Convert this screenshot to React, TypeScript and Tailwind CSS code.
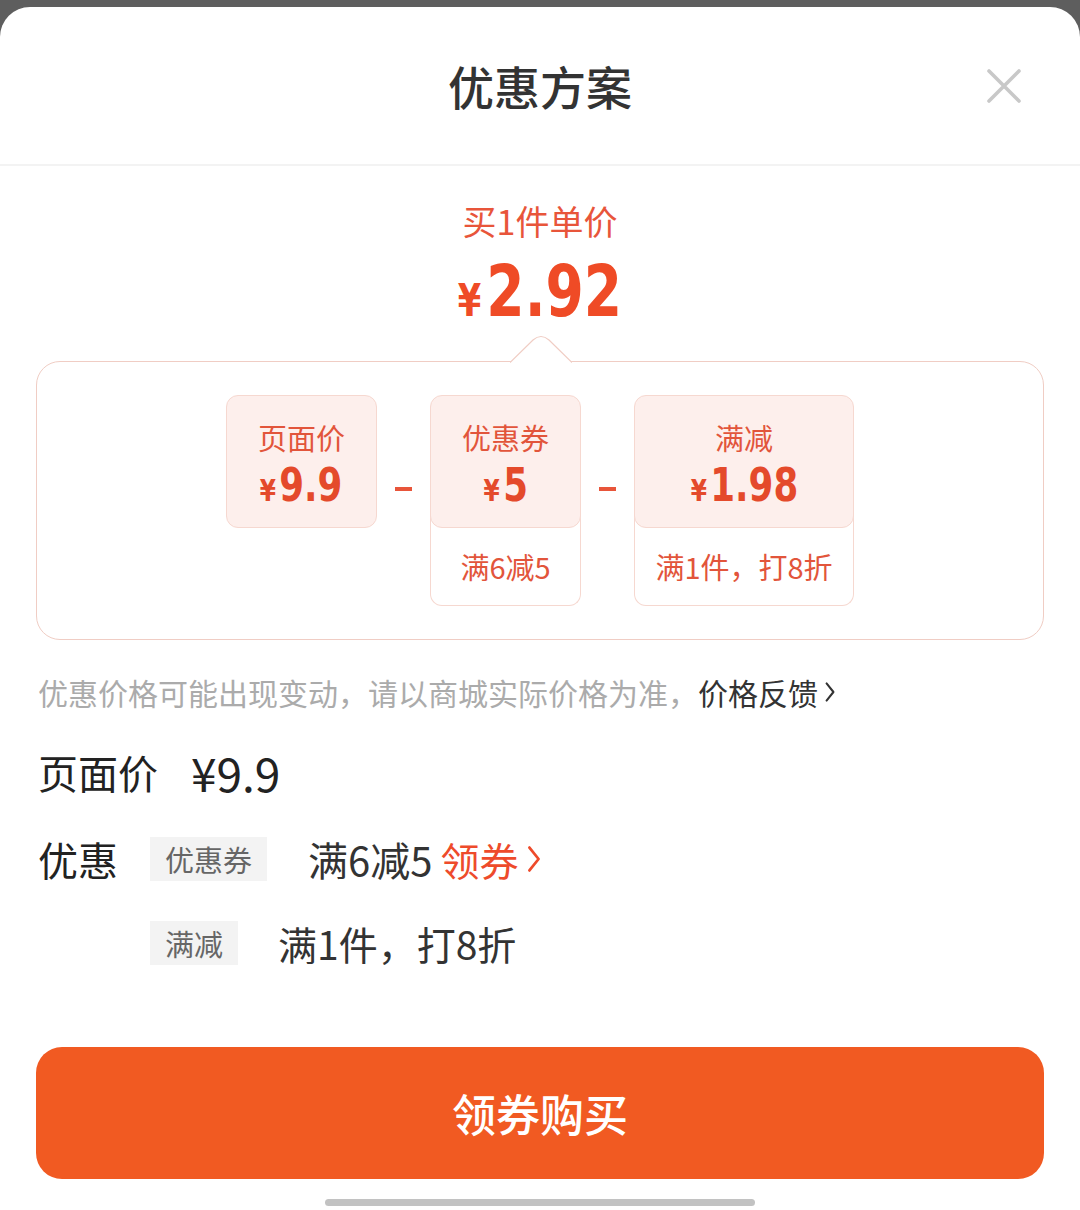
import { type ReactNode } from "react";

const CJK = { fontFamily: "'Noto Sans CJK SC', 'Noto Sans', sans-serif" };
const NUM = { fontFamily: "'DejaVu Sans Condensed', 'DejaVu Sans', Roboto, sans-serif" };

function Chevron({ className }: { className?: string }) {
  return (
    <svg viewBox="0 0 14 26" className={className} fill="none" stroke="currentColor" strokeWidth="2.4" strokeLinecap="round" strokeLinejoin="round">
      <path d="M3 3 L11 13 L3 23" />
    </svg>
  );
}

function PriceCard({ label, price, note, width }: { label: string; price: string; note?: string; width: string }) {
  return (
    <div className={`flex flex-col ${width}`}>
      <div className="relative z-10 h-[133px] rounded-[12px] bg-[#fdefec] border border-[#f6d8d0] flex flex-col items-center pt-[22px]">
        <div className="text-[29px] leading-[38px] text-[#e2553b]">{label}</div>
        <div className="mt-[7px] flex items-baseline text-[#e44a2b] font-bold scale-x-[0.86]" style={NUM}>
          <span className="text-[30px] leading-[44px] mr-[4px]">¥</span>
          <span className="text-[46px] leading-[44px]">{price}</span>
        </div>
      </div>
      {note && (
        <div className="h-[90px] -mt-[12px] pt-[12px] rounded-b-[12px] border border-t-0 border-[#f6d8d0] flex items-center justify-center text-[29px] text-[#e2553b]">
          {note}
        </div>
      )}
    </div>
  );
}

function Minus() {
  return (
    <div className="w-[53px] h-[133px] flex justify-center">
      <div className="w-[17px] h-[4px] bg-[#e8553a] mt-[92px]" />
    </div>
  );
}

function Tag({ children }: { children: ReactNode }) {
  return <div className="h-[44px] px-[15px] bg-[#f3f3f3] text-[#666] text-[29px] leading-[44px]">{children}</div>;
}

export default function App() {
  return (
    <div className="w-[1080px] h-[1210px] bg-[#5e5e5e] overflow-hidden" style={CJK}>
      <div className="mt-[7px] h-[1203px] bg-white rounded-t-[30px] flex flex-col">
        {/* header */}
        <div className="relative h-[157px] flex items-center justify-center">
          <div className="text-[46px] font-medium text-[#333]">优惠方案</div>
          <svg viewBox="0 0 36 36" className="absolute left-[986px] top-[61px] w-[36px] h-[36px]" stroke="#c8c8c8" strokeWidth="3.6" strokeLinecap="round">
            <path d="M3 3 L33 33 M33 3 L3 33" />
          </svg>
        </div>
        <div className="h-[2px] bg-[#f3f3f3]" />

        {/* unit price */}
        <div className="mt-[35px] text-center text-[34px] leading-[40px] text-[#e8553a]">买1件单价</div>
        <div className="mt-[15px] h-[70px] flex items-baseline justify-center text-[#ef4b26] font-bold scale-x-[0.85]" style={NUM}>
          <span className="text-[44px] leading-[70px] mr-[6px]">¥</span>
          <span className="text-[72px] leading-[70px]">2.92</span>
        </div>

        {/* breakdown box */}
        <div className="relative mt-[35px] mx-[36px] h-[279px] rounded-[24px] border border-[#f0cdc4] pt-[33px] flex justify-center">
          <svg viewBox="0 0 62 28" className="absolute left-[473px] -top-[27px] w-[62px] h-[28px]" fill="none">
            <path d="M0 27.5 L23 5 Q31 -2 39 5 L62 27.5 Z" fill="#fff" />
            <path d="M0 27.5 L23 5 Q31 -2 39 5 L62 27.5" stroke="#f0cdc4" strokeWidth="1.2" />
          </svg>
          <div className="flex items-start">
            <PriceCard label="页面价" price="9.9" width="w-[151px]" />
            <Minus />
            <PriceCard label="优惠券" price="5" note="满6减5" width="w-[151px]" />
            <Minus />
            <PriceCard label="满减" price="1.98" note="满1件，打8折" width="w-[220px]" />
          </div>
        </div>

        {/* disclaimer */}
        <div className="mt-[32px] ml-[38px] flex items-center text-[30px] leading-[40px]">
          <span className="text-[#ababab]">优惠价格可能出现变动，请以商城实际价格为准，</span>
          <span className="text-[#333]">价格反馈</span>
          <Chevron className="w-[12px] h-[24px] ml-[6px] text-[#333]" />
        </div>

        {/* page price */}
        <div className="mt-[36px] ml-[38px] flex items-center h-[48px] text-[#222]">
          <span className="text-[40px]">页面价</span>
          <span className="ml-[33px] text-[46px]">¥9.9</span>
        </div>

        {/* discounts */}
        <div className="mt-[39px] ml-[38px] flex items-center h-[48px]">
          <span className="w-[112px] text-[40px] text-[#222]">优惠</span>
          <Tag>优惠券</Tag>
          <span className="ml-[41px] text-[40px] text-[#333]">满6减5</span>
          <span className="ml-[8px] text-[39px] text-[#ee4b2b]">领券</span>
          <Chevron className="w-[16px] h-[32px] ml-[8px] text-[#ee4b2b]" />
        </div>
        <div className="mt-[36px] ml-[150px] flex items-center h-[48px]">
          <Tag>满减</Tag>
          <span className="ml-[40px] text-[39px] text-[#333]">满1件，打8折</span>
        </div>

        {/* button */}
        <button className="mt-[80px] mx-[36px] h-[132px] rounded-[26px] bg-[#f15a22] text-white text-[44px] font-medium">
          领券购买
        </button>
        <div className="mt-[20px] mx-auto w-[430px] h-[7px] rounded-full bg-[#c2c2c2]" />
      </div>
    </div>
  );
}
